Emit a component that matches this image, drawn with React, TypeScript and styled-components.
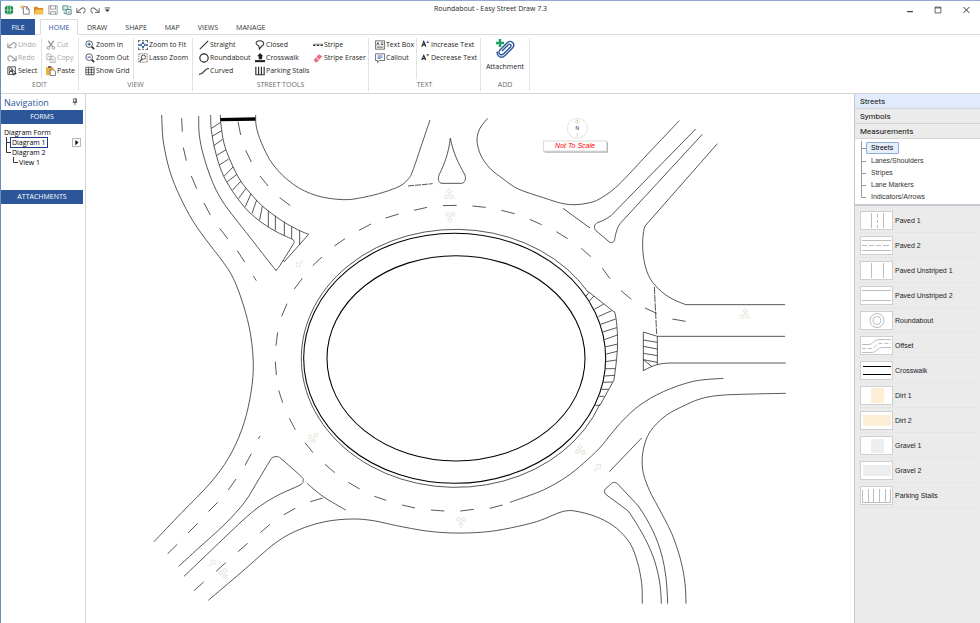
import React from "react";
import styled, { createGlobalStyle } from "styled-components";

const UI = '"Open Sans", "Noto Sans", sans-serif';
const ARIAL = '"Liberation Sans", Arial, sans-serif';
const BLUE = "#2b579a";

const GlobalStyle = createGlobalStyle`
  * { box-sizing: border-box; }
  html, body, #root { height: 100%; }
  body { margin: 0; background: #fff; font-family: ${UI}; font-size: 7px; color: #262626; }
  button { font: inherit; color: inherit; border: 0; padding: 0; margin: 0; background: none; cursor: pointer; }
`;

const Window = styled.div`
  height: 100vh;
  display: flex;
  flex-direction: column;
  border-top: 1px solid #8fa9d2;
  border-left: 1px solid #6d8dbf;
  overflow: hidden;
`;

const TitleBar = styled.header`
  display: grid;
  grid-template-columns: 1fr auto 1fr;
  align-items: center;
  height: 18px;
`;
const QuickBar = styled.div`
  display: flex;
  align-items: center;
  gap: 4px;
  padding-left: 3px;
`;
const QuickButton = styled.button`
  display: flex;
  width: 10px;
  height: 12px;
  align-items: center;
  &:first-child { margin-right: 2px; }
`;
const Title = styled.h1`
  margin: 0;
  font-size: 7px;
  line-height: 12px;
  padding-bottom: 2px;
  font-weight: 400;
`;
const WindowButtons = styled.div`
  display: flex;
  justify-content: flex-end;
  gap: 18px;
  padding-right: 9px;
`;
const WindowButton = styled.button`
  display: flex;
  width: 10px;
  height: 10px;
`;

const Tabs = styled.nav`
  display: flex;
  height: 16px;
  border-bottom: 1px solid #dcdcdc;
`;
const Tab = styled.button<{ $kind?: "file" | "active" }>`
  font-size: 7px;
  height: 16px;
  padding: 0 9px;
  color: ${(p) => (p.$kind === "file" ? "#fff" : p.$kind === "active" ? BLUE : "#333")};
  ${(p) => p.$kind === "file" && `background: ${BLUE}; width: 34px; margin-right: 5px; padding: 0;`}
  ${(p) =>
    p.$kind === "active" &&
    `border: 1px solid #dcdcdc; border-bottom: 0; background: #fff; width: 38px; padding: 0;`}
`;

const Ribbon = styled.div`
  display: flex;
  height: 59px;
  border-bottom: 1px solid #d6d6d6;
`;
const Group = styled.section<{ $w: number }>`
  display: flex;
  flex-direction: column;
  width: ${(p) => p.$w}px;
  margin: 3px 0 2px;
  border-right: 1px solid #e2e2e2;
`;
const GroupColumns = styled.div`
  display: flex;
  flex: 1;
`;
const Column = styled.div<{ $w: number; $line?: boolean }>`
  display: flex;
  flex-direction: column;
  width: ${(p) => p.$w}px;
  padding-left: 6px;
  border-right: ${(p) => (p.$line ? "1px solid #e2e2e2" : "0")};
  & + & { padding-left: 4px; }
`;
const GroupLabel = styled.h2`
  margin: 0;
  font-size: 7px;
  line-height: 12px;
  font-weight: 400;
  text-align: center;
  color: #6a6a6a;
`;
const Command = styled.button`
  display: flex;
  align-items: center;
  gap: 1px;
  height: 13px;
  white-space: nowrap;
  &:disabled { color: #a6a6a6; }
`;
const BigCommand = styled.button`
  display: flex;
  flex-direction: column;
  align-items: center;
  gap: 3px;
  padding-top: 1px;
  width: 100%;
`;

const Body = styled.div`
  display: flex;
  flex: 1;
  min-height: 0;
`;
const Navigation = styled.aside`
  width: 85px;
  flex: none;
  border-right: 1px solid #d6d6d6;
`;
const NavHead = styled.div`
  display: flex;
  align-items: center;
  justify-content: space-between;
  height: 16px;
  padding: 0 6px 0 3px;
`;
const NavTitle = styled.h2`
  margin: 0;
  font-size: 9px;
  font-weight: 400;
  color: ${BLUE};
`;
const NavBar = styled.h3`
  margin: 0 2px 0 0;
  height: 14px;
  font-size: 7px;
  line-height: 14px;
  font-weight: 400;
  text-align: center;
  color: #fff;
  background: ${BLUE};
`;
const NavTree = styled.div`
  height: 66px;
  padding: 3px 4px 0 3px;
`;
const NavLine = styled.div<{ $level: number }>`
  display: flex;
  align-items: center;
  height: 10px;
  padding-left: ${(p) => p.$level * 7}px;
`;
const NavItem = styled.button<{ $on?: boolean }>`
  height: 11px;
  line-height: 9px;
  color: #000;
  white-space: nowrap;
  ${(p) => p.$on && "border: 1px solid #1c3a8c; margin-left: -2px; padding: 0 1px;"}
`;
const OpenButton = styled.button`
  display: flex;
  width: 9px;
  height: 9px;
  margin-left: auto;
  border: 1px solid #b8b8b8;
`;

const Canvas = styled.main`
  flex: 1;
  min-width: 0;
  svg { display: block; width: 100%; height: 100%; }
`;

const Library = styled.aside`
  width: 126px;
  flex: none;
  display: flex;
  flex-direction: column;
  border-left: 1px solid #c9c9c9;
  font-family: ${ARIAL};
  background: #ebebeb;
`;
const LibraryHead = styled.button<{ $on?: boolean }>`
  height: 15px;
  flex: none;
  padding-left: 5px;
  font-family: Roboto, sans-serif;
  font-size: 8px;
  text-align: left;
  color: #111;
  background: ${(p) => (p.$on ? "#e1ebfd" : "#ebebeb")};
  border-bottom: 1px solid #d4d4d4;
`;
const LibraryTree = styled.div`
  background: #fff;
  height: 67px;
  flex: none;
  padding: 2px 0 0 6px;
  border-bottom: 2px solid #c8ccd2;
`;
const LibraryLine = styled.div`
  display: flex;
  align-items: center;
  height: 12px;
  &:first-child { height: 14px; }
`;
const TreeMark = styled.svg`
  flex: none;
  width: 10px;
  height: 14px;
`;
const LibraryItem = styled.button<{ $on?: boolean }>`
  font-size: 7px;
  line-height: 10px;
  color: #333;
  ${(p) =>
    p.$on &&
    "border: 1px solid #8fb0d6; border-radius: 1px; background: #e6eefb; margin-left: -5px; padding: 0 5px 0 4px; color: #000;"}
`;
const Shapes = styled.ul`
  list-style: none;
  margin: 0;
  padding: 2px 2px 0 3px;
`;
const ShapeRow = styled.li`
  height: 25px;
  border-bottom: 1px solid #e5e5e5;
`;
const ShapeButton = styled.button`
  display: flex;
  align-items: center;
  gap: 2px;
  width: 100%;
  height: 24px;
  padding-left: 2px;
  font-size: 7px;
  color: #222;
`;
const Thumb = styled.svg`
  width: 33px;
  height: 19px;
  border: 1px solid #cfcfcf;
  background: #fff;
`;

/* ---------- icons ---------- */

const icons: Record<string, React.ReactNode> = {
  logo: (
    <>
      <path d="M3 1h6l2 2v6l-2 2H3L1 9V3z" fill="#1d8a4a" />
      <path d="M4.500 1v10M7.500 1v10M1 6h10" stroke="#dff3e5" strokeWidth=".8" />
    </>
  ),
  file: (
    <>
      <path d="M4 2h4l3 3v6H4z" fill="#fff" stroke="#666" />
      <path d="M8 2v3h3" fill="none" stroke="#666" />
      <path d="M2.500 0v5M0 2.500h5" stroke="#e8a13a" />
    </>
  ),
  folder: (
    <>
      <path d="M0 2h4l1 1.500h6V11H0z" fill="#d58a1a" />
      <path d="M2.500 5.500H12L10 11H0z" fill="#f6c155" />
    </>
  ),
  save: <path d="M1 1h10v10H1zM3 1v4h6V1M3 11V8h6v3" fill="none" stroke="#8b8b8b" />,
  saveAll: (
    <>
      <path d="M1 1h6v5H1z" fill="#d5eee2" stroke="#3c8a6b" />
      <path d="M5 5.500h6V11H5z" fill="#fff" stroke="#3c6c7b" />
      <path d="M7 8.500h2.500M2.500 8v2h2M8.500 2h2v2" fill="none" stroke="#3c8a6b" />
    </>
  ),
  undo: (
    <path d="M1 4v5h5M1.500 8.500 6 4.500c2-2 5-1 5 1.500 0 1.500-1 3-2.500 4" fill="none" stroke="#777" strokeWidth="1.300" />
  ),
  redo: (
    <path d="M11 4v5H6M10.500 8.500 6 4.500C4 2.500 1 3.500 1 6c0 1.500 1 3 2.500 4" fill="none" stroke="#777" strokeWidth="1.300" />
  ),
  undoOff: (
    <path d="M1 4v5h5M1.500 8.500 6 4.500c2-2 5-1 5 1.500 0 1.500-1 3-2.500 4" fill="none" stroke="#a4a4a4" strokeWidth="1.500" />
  ),
  redoOff: (
    <path d="M11 4v5H6M10.500 8.500 6 4.500C4 2.500 1 3.500 1 6c0 1.500 1 3 2.500 4" fill="none" stroke="#a4a4a4" strokeWidth="1.500" />
  ),
  caret: (
    <>
      <path d="M1 3.500h6" stroke="#333" />
      <path d="M1 5.500h6L4 8.500z" fill="#333" />
    </>
  ),
  select: (
    <>
      <path d="M1 1h9v9H1z" fill="none" stroke="#333" />
      <circle cx="4.500" cy="4" r="1.800" fill="none" stroke="#333" />
      <path d="M3 9V6.500h3M6 4l5 5H8.500l-1 2z" fill="#fff" stroke="#222" />
    </>
  ),
  cut: (
    <>
      <path d="M2.500 1 8 8M9.500 1 4 8" stroke="#8b8b8b" strokeWidth="1.300" />
      <circle cx="3" cy="9.500" r="1.600" fill="none" stroke="#8b8b8b" />
      <circle cx="9" cy="9.500" r="1.600" fill="none" stroke="#8b8b8b" />
    </>
  ),
  copy: (
    <path d="M1 1h4l1.500 1.500V8H1zM5 4h4l2 2v5.500H5zM2.500 4H5M7 7.500h2.500M7 9.500h2.500" fill="none" stroke="#a8a8a8" />
  ),
  paste: (
    <>
      <path d="M0 1.500h9V11H0z" fill="#f0b03c" />
      <path d="M2.500 0h4v2.500h-4z" fill="#6a6a6a" />
      <path d="M5 4.500h4l2.500 2v5H5z" fill="#fff" stroke="#666" />
    </>
  ),
  zoomIn: (
    <>
      <circle cx="5" cy="5" r="4" fill="#fff" stroke="#444" />
      <path d="M3 5h4M5 3v4" stroke={BLUE} strokeWidth="1.300" />
      <path d="m8 8 3 3" stroke="#333" strokeWidth="2" />
    </>
  ),
  zoomOut: (
    <>
      <circle cx="5" cy="5" r="4" fill="#fff" stroke="#444" />
      <path d="M3 5h4" stroke={BLUE} strokeWidth="1.300" />
      <path d="m8 8 3 3" stroke="#333" strokeWidth="2" />
    </>
  ),
  grid: <path d="M1 1.500h10v9H1zM1 4.500h10M1 7.500h10M4.300 1.500v9M7.700 1.500v9" fill="none" stroke="#444" />,
  fit: (
    <>
      <path d="M.5 3V.5H3M9 .5h2.500V3M11.500 9v2.500H9M3 11.500H.5V9" fill="none" stroke="#333" />
      <path d="M5 .5h2M5 11.500h2" stroke="#333" />
      <path d="M0 6h3.500M8.500 6H12M6 2v2.500M6 7.500V10" stroke={BLUE} strokeWidth="2" />
      <circle cx="6" cy="6" r="2" fill="none" stroke={BLUE} />
    </>
  ),
  lasso: (
    <>
      <path d="M1 1h10v10H1z" fill="none" stroke="#666" strokeDasharray="2 1" />
      <circle cx="6.500" cy="5" r="2.500" fill="#fff" stroke="#333" />
      <path d="m5 7-3 3.500" stroke="#333" strokeWidth="1.300" />
    </>
  ),
  straight: <path d="M1 11 11 1" stroke="#333" strokeWidth="1.300" />,
  circle: <circle cx="6" cy="6" r="5" fill="none" stroke="#222" strokeWidth="1.400" />,
  curved: <path d="M0 10c3 0 4-1 5.500-3s3-4 6.500-4" fill="none" stroke="#333" strokeWidth="1.400" />,
  closed: (
    <path d="M3 1.500c3-1.500 7.500 0 7.500 3S5.500 7.500 5.500 11C4 8.500 6 7 3 6 .5 5 1 2.500 3 1.500z" fill="none" stroke="#333" strokeWidth="1.300" />
  ),
  crosswalk: (
    <>
      <path d="M0 8.500h12V11H0z" fill="#222" />
      <path d="M6 0 2.500 4h2v3.500h4V4h1.500z" fill="#222" />
    </>
  ),
  stalls: <path d="M1 1v9.500h10V1M4.300 1v9M7.700 1v9" fill="none" stroke="#333" strokeWidth="1.400" />,
  stripe: (
    <>
      <path d="M0 5h12" stroke="#777" />
      <path d="M0 6.500h3M4.500 6.500h3M9 6.500h3" stroke="#333" strokeWidth="1.500" />
    </>
  ),
  eraser: (
    <>
      <path d="m1 8 6-6.500L11 4l-6 7H2.500z" fill="#ee6d83" />
      <path d="m3.500 5.300 4 3" stroke="#fff" />
    </>
  ),
  textBox: (
    <>
      <path d="M.5 1h11v10H.5z" fill="#fff" stroke="#555" />
      <path d="M2 6.500 3.500 3 5 6.500M7 3.500h3M7 5.500h3M2 8.500h8" fill="none" stroke="#333" />
    </>
  ),
  callout: (
    <>
      <path d="M.5 1h11v8H5l-2 2.500V9H.5z" fill="#fff" stroke="#555" />
      <path d="M3 3.500h6M3 5h6M3 6.500h4" stroke="#3a76c4" />
    </>
  ),
  bigger: (
    <>
      <path d="M1 9 3.700 2 6.500 9M2 6.500h3.500" fill="none" stroke="#222" strokeWidth="1.400" />
      <path d="M7 4h4L9 1z" fill={BLUE} />
    </>
  ),
  smaller: (
    <>
      <path d="M1 9.500 3.700 3 6.500 9.500M2 7.500h3.500" fill="none" stroke="#222" strokeWidth="1.400" />
      <path d="M7 1.500h4L9 4.500z" fill={BLUE} />
    </>
  ),
  pin: <path d="M4 1h4v5H4zM2.500 6.500h7M6 6.500V11M7.300 1v5" fill="none" stroke="#333" />,
  play: <path d="M4 1.500v9L9.500 6z" fill="#111" />,
  min: <path d="M2.500 8h7" stroke="#222" strokeWidth="1.300" />,
  max: <path d="M2.500 2.500h7v7h-7zM2.500 3.500h7" fill="none" stroke="#444" strokeWidth="1" />,
  close: <path d="m3 2.500 7 7M10 2.500l-7 7" stroke="#333" strokeWidth="1.200" />,
};

const Glyph = styled.svg`
  display: block;
  flex: none;
`;
const Icon = ({ name, size = 10 }: { name: string; size?: number }) => (
  <Glyph width={size} height={size} viewBox="0 0 12 12" aria-hidden="true">
    {icons[name]}
  </Glyph>
);

const Cmd = ({ icon, size, children, off }: { icon: string; size?: number; children: string; off?: boolean }) => (
  <Command disabled={off}>
    <Icon name={icon} size={size} />
    {children}
  </Command>
);

/* ---------- road drawing ---------- */

type Pt = [number, number];
type Seg = [number, number, number, number];

const curve = (pts: Pt[]) => {
  let d = `M${pts[0]}`;
  for (let i = 0; i < pts.length - 1; i++) {
    const a = pts[i - 1] || pts[i];
    const b = pts[i];
    const c = pts[i + 1];
    const e = pts[i + 2] || c;
    d += `C${b[0] + (c[0] - a[0]) / 6},${b[1] + (c[1] - a[1]) / 6} ${c[0] - (e[0] - b[0]) / 6},${c[1] - (e[1] - b[1]) / 6} ${c}`;
  }
  return d;
};
const lines = (segs: Seg[]) => segs.map(([a, b, c, d]) => `M${a},${b}L${c},${d}`).join("");

const Area = ({ x, y, children }: { x: number; y: number; children: React.ReactNode }) => (
  <g transform={`translate(${x} ${y})`}>{children}</g>
);
const Curve = ({ pts }: { pts: Pt[] }) => <path d={curve(pts)} />;
const Lines = ({ segs }: { segs: Seg[] }) => <path d={lines(segs)} />;

const Marker = ({ x, y, turn, single }: { x: number; y: number; turn: number; single?: boolean }) => (
  <g transform={`translate(${x} ${y}) rotate(${turn})`} stroke="#e0dccf" strokeWidth="2">
    {single ? (
      <path d="M-3 12V-3h-6L0-14 9-3H3v15z" />
    ) : (
      <path d="M-2 4V-6h-5L0-16 7-6H2V2l6 4 2-4 4 10-12 2 3-4-5-2-6 2 2 4-11-2 3-11 3 5z" />
    )}
  </g>
);

const Drawing = () => (
  <svg viewBox="0 0 2304 1587" preserveAspectRatio="xMidYMin meet" role="img" aria-label="Roundabout diagram">
    <g fill="none" stroke="#3c3c3c" strokeWidth="2.600">
      <ellipse cx="1110" cy="793" rx="387" ry="308" stroke="#000" strokeWidth="3.200" />
      <ellipse cx="1106" cy="793" rx="453" ry="375" stroke="#000" strokeWidth="3.200" />
      <path d="M1542 930A463 387 0 1 1 1506 594" />

      <Area x={192} y={33}>
        <Curve
          pts={[
            [35, 30], [40, 110], [60, 200], [90, 275], [130, 350], [180, 420], [215, 465], [250, 520], [280, 600],
            [302, 690], [310, 790], [299, 885], [275, 975], [235, 1060], [180, 1135], [96, 1222], [12, 1310],
          ]}
        />
        <Lines
          segs={[
            [95, 40, 97, 80], [100, 128, 109, 167], [124, 213, 140, 251], [162, 294, 181, 330], [209, 370, 233, 401],
            [262, 437, 284, 471], [310, 513, 319, 527],
            [264, 50, 272, 90], [287, 136, 304, 171], [330, 213, 354, 243], [389, 278, 421, 302],
            [627, 376, 663, 357], [553, 423, 585, 401], [488, 482, 516, 456], [433, 552, 457, 520],
            [411, 596, 395, 634], [383, 682, 378, 722], [376, 770, 379, 810], [386, 856, 398, 893],
          ]}
        />
        <Curve
          pts={[
            [146, 33], [148, 90], [160, 150], [185, 225], [215, 285], [255, 340], [300, 397], [371, 488], [378, 493],
            [386, 487], [428, 420], [432, 410], [425, 402], [375, 378], [325, 345], [285, 308], [245, 255], [215, 200],
            [195, 135], [184, 75], [182, 30],
          ]}
        />
        <Curve
          pts={[
            [211, 30], [213, 60], [222, 115], [240, 165], [270, 225], [310, 275], [345, 310], [400, 350], [445, 375],
            [476, 388],
          ]}
        />
        <path d="M476 388 403 470l-3-5" />
        <Lines
          segs={[
            [184, 70, 212, 52], [186, 94, 215, 77], [191, 122, 218, 103], [199, 152, 228, 134], [208, 180, 236, 162],
            [222, 214, 249, 186], [232, 230, 261, 208], [248, 255, 273, 228], [266, 280, 288, 250], [286, 305, 303, 266],
            [306, 325, 320, 285], [329, 345, 337, 303], [355, 365, 355, 317], [376, 376, 376, 332], [403, 392, 403, 350],
            [425, 402, 425, 364], [449, 420, 449, 376],
          ]}
        />
        <path d="M211 44 317 42" stroke="#000" strokeWidth="10" />
        <Curve
          pts={[
            [317, 30], [319, 65], [335, 115], [370, 180], [430, 238], [500, 272], [580, 284], [640, 277], [700, 262],
            [750, 243], [775, 222], [788, 198], [814, 122], [840, 45],
          ]}
        />
        <Marker x={448} y={476} turn={225} single />
      </Area>

      <Area x={852} y={33}>
        <path d="M241 99C236 145 222 180 208 208 202 222 206 235 216 235H275C286 233 288 222 285 210 265 175 248 140 241 99" />
        <path d="M114 243 188 236" strokeDasharray="18 3" />
        <Lines
          segs={[
            [47, 339, 86, 327], [132, 316, 171, 307], [219, 302, 260, 301], [307, 303, 347, 307],
            [394, 316, 434, 326], [479, 343, 515, 359], [559, 380, 593, 401], [634, 430, 662, 455], [697, 490, 720, 521],
            [579, 310, 660, 369],
          ]}
        />
        <Curve
          pts={[
            [353, 40], [330, 70], [321, 105], [332, 150], [360, 190], [400, 222], [445, 252], [520, 278], [575, 295],
            [615, 299], [655, 294], [690, 281], [745, 240], [836, 144], [928, 47],
          ]}
        />
        <Marker x={238} y={267} turn={0} />
        <Marker x={240} y={337} turn={180} />
        <circle cx="622" cy="70" r="30" stroke="#dedede" />
        <path d="M622 45v12M622 84v12M614 53l8-9 8 9" stroke="#cfcac0" />
        <path d="M524 141h188v-30" stroke="#b5b5b5" strokeWidth="4" />
        <rect x="520" y="108" width="190" height="30" fill="#fff" stroke="#d5d5d5" />
      </Area>

      <Area x={1452} y={33}>
        <path d="M377 72 123 332C105 345 92 350 82 353 73 358 70 368 78 377L118 411C128 415 133 410 134 403 138 380 142 368 150 356L397 88" />
        <path d="M442 116 225 363C212 400 214 500 255 540 280 570 310 586 348 599H645" />
        <Lines segs={[[153, 557, 184, 583]]} />
      </Area>

      <Area x={1422} y={558}>
        <path d="M85 35 165 98C172 130 174 180 172 210 170 245 165 275 162 300L120 376" />
        <Lines
          segs={[
            [78, 48, 88, 36], [88, 63, 102, 48], [103, 88, 131, 72], [115, 110, 155, 92], [122, 133, 167, 117],
            [128, 156, 170, 143], [133, 179, 172, 165], [135, 201, 173, 192], [136, 223, 171, 214], [136, 245, 169, 240],
            [136, 266, 165, 266], [133, 288, 164, 286], [129, 307, 158, 306], [124, 328, 146, 328], [118, 349, 133, 349],
            [106, 376, 120, 376],
            [250, 180, 292, 187], [250, 199, 292, 207], [250, 220, 292, 227], [250, 239, 292, 247], [250, 239, 276, 260],
            [255, 84, 290, 100], [337, 117, 377, 124],
          ]}
        />
        <path d="M283 20 290 162" strokeDasharray="22 3" />
        <path d="M675 169H292L250 156V272C285 253 300 250 333 249H677M292 169v85" />
        <Curve
          pts={[
            [490, 295], [400, 304], [310, 335], [240, 375], [190, 420], [155, 460], [118, 505], [70, 550], [20, 590],
            [-50, 630], [-150, 667],
          ]}
        />
        <Curve
          pts={[
            [677, 340], [580, 342], [480, 346], [420, 357], [370, 378], [320, 405], [280, 442], [258, 480], [247, 530],
            [250, 580], [270, 635], [295, 682], [335, 760], [362, 840], [375, 910], [378, 971],
          ]}
        />
        <Marker x={555} y={101} turn={0} />
      </Area>

      <Area x={177} y={918}>
        <Lines
          segs={[
            [345, 108, 340, 117], [319, 161, 300, 196], [273, 237, 250, 270], [218, 307, 191, 334], [158, 370, 129, 399],
            [97, 433, 68, 461], [533, 294, 496, 305], [451, 325, 417, 344], [375, 373, 346, 398], [308, 430, 279, 455],
            [242, 488, 213, 514], [176, 546, 147, 572], [433, 55, 451, 89], [480, 128, 504, 158], [540, 193, 569, 218],
            [610, 247, 644, 267], [688, 289, 724, 301],
          ]}
        />
        <Curve
          pts={[
            [101, 499], [160, 445], [240, 372], [300, 305], [340, 240], [375, 182], [384, 172], [397, 170], [408, 176],
            [468, 229], [474, 242], [465, 255], [400, 285], [350, 315], [300, 355], [210, 440], [117, 529],
          ]}
        />
        <Curve pts={[[486, 250], [535, 290], [602, 330]]} />
        <Marker x={507} y={111} turn={45} />
        <Marker x={201} y={490} turn={45} single />
        <Marker x={237} y={523} turn={150} />
      </Area>

      <Area x={852} y={918}>
        <Lines segs={[[96, 315, 135, 324], [183, 330, 223, 333], [271, 333, 311, 328], [359, 325, 398, 315]]} />
        <Marker x={273} y={367} turn={180} />
        <Marker x={633} y={153} turn={120} />
      </Area>

      <Area x={1392} y={978}>
        <Lines segs={[[275, 54, 178, 155]]} />
        <path d="M334 551C332 440 300 370 235 273L167 223C162 217 162 211 167 206L185 190C192 185 199 187 205 194L265 258C335 360 350 440 353 551" />
        <Curve
          pts={[
            [277, 551], [275, 490], [262, 425], [240, 370], [200, 325], [150, 295], [90, 276], [40, 274], [-40, 305],
            [-140, 328], [-210, 337], [-290, 339], [-370, 333], [-460, 317], [-530, 302], [-595, 297], [-675, 305],
            [-755, 330], [-825, 370], [-925, 456], [-1025, 541],
          ]}
        />
        <Marker x={143} y={143} turn={45} single />
      </Area>
    </g>
    <text x="1474" y="109" fontFamily="Liberation Sans" fontSize="15" textAnchor="middle" fill="#223">
      N
    </text>
    <text x="1467" y="163" fontFamily="Liberation Sans" fontSize="21" fontStyle="italic" textAnchor="middle" fill="#f00">
      Not To Scale
    </text>
  </svg>
);

/* ---------- library thumbnails ---------- */

const g = { fill: "none", stroke: "#bdbdbd" };
const shapes: [string, React.ReactNode][] = [
  ["Paved 1", <path key="a" {...g} d="M10.500 1v15M22.500 1v15M16.500 2v4M16.500 8v3M16.500 13v3" />],
  ["Paved 2", <path key="b" {...g} d="M1 3.500h29M1 13.500h29M1 8.500h5M8 8.500h5M15 8.500h5M22 8.500h6" />],
  ["Paved Unstriped 1", <path key="c" {...g} d="M10.500 1v15M22.500 1v15" />],
  ["Paved Unstriped 2", <path key="d" {...g} d="M1 3.500h29M1 13.500h29" />],
  ["Roundabout", <g key="e" {...g}><circle cx="16" cy="8.500" r="7" /><circle cx="16" cy="8.500" r="4" /></g>],
  [
    "Offset",
    <g key="f" {...g}>
      <path d="M1 7.500h7c4 0 5-5 10-5h12M1 15.500h10c4 0 6-5 10-5h9" />
      <path d="M1 11.500h9c4 0 5-5 9-5h11" strokeDasharray="4 2" />
    </g>,
  ],
  ["Crosswalk", <path key="g" stroke="#000" d="M2 4.500h28M2 12.500h28" />],
  ["Dirt 1", <rect key="h" x="10" y="1" width="13" height="15" fill="#fdeed6" />],
  ["Dirt 2", <rect key="i" x="2" y="3" width="28" height="11" fill="#fdeed6" />],
  ["Gravel 1", <rect key="j" x="10" y="2" width="13" height="14" fill="#eee" />],
  ["Gravel 2", <rect key="k" x="2" y="3" width="28" height="11" fill="#eee" />],
  ["Parking Stalls", <path key="l" {...g} d="M1 15.500h29M1.500 3v12M7.500 2v14M12.500 2v14M18.500 2v14M24.500 2v14M29.500 2v14" />],
];

const kinds = ["Streets", "Lanes/Shoulders", "Stripes", "Lane Markers", "Indicators/Arrows"];

export default function App() {
  return (
    <>
      <GlobalStyle />
      <Window>
        <TitleBar>
          <QuickBar>
            {["logo", "file", "folder", "save", "saveAll", "undo", "redo", "caret"].map((n) => (
              <QuickButton key={n} aria-label={n}>
                <Icon name={n} />
              </QuickButton>
            ))}
          </QuickBar>
          <Title>Roundabout - Easy Street Draw 7.3</Title>
          <WindowButtons>
            {["min", "max", "close"].map((n) => (
              <WindowButton key={n} aria-label={n}>
                <Icon name={n} />
              </WindowButton>
            ))}
          </WindowButtons>
        </TitleBar>

        <Tabs>
          <Tab $kind="file">FILE</Tab>
          <Tab $kind="active">HOME</Tab>
          {["DRAW", "SHAPE", "MAP", "VIEWS", "MANAGE"].map((t) => (
            <Tab key={t}>{t}</Tab>
          ))}
        </Tabs>

        <Ribbon>
          <Group $w={78}>
            <GroupColumns>
              <Column $w={41} $line>
                <Cmd icon="undoOff" off>Undo</Cmd>
                <Cmd icon="redoOff" off>Redo</Cmd>
                <Cmd icon="select">Select</Cmd>
              </Column>
              <Column $w={36}>
                <Cmd icon="cut" off>Cut</Cmd>
                <Cmd icon="copy" off>Copy</Cmd>
                <Cmd icon="paste">Paste</Cmd>
              </Column>
            </GroupColumns>
            <GroupLabel>EDIT</GroupLabel>
          </Group>
          <Group $w={114}>
            <GroupColumns>
              <Column $w={55} $line>
                <Cmd icon="zoomIn">Zoom In</Cmd>
                <Cmd icon="zoomOut">Zoom Out</Cmd>
                <Cmd icon="grid">Show Grid</Cmd>
              </Column>
              <Column $w={58}>
                <Cmd icon="fit">Zoom to Fit</Cmd>
                <Cmd icon="lasso">Lasso Zoom</Cmd>
              </Column>
            </GroupColumns>
            <GroupLabel>VIEW</GroupLabel>
          </Group>
          <Group $w={176}>
            <GroupColumns>
              <Column $w={58}>
                <Cmd icon="straight">Straight</Cmd>
                <Cmd icon="circle">Roundabout</Cmd>
                <Cmd icon="curved">Curved</Cmd>
              </Column>
              <Column $w={58}>
                <Cmd icon="closed">Closed</Cmd>
                <Cmd icon="crosswalk">Crosswalk</Cmd>
                <Cmd icon="stalls">Parking Stalls</Cmd>
              </Column>
              <Column $w={59}>
                <Cmd icon="stripe">Stripe</Cmd>
                <Cmd icon="eraser">Stripe Eraser</Cmd>
              </Column>
            </GroupColumns>
            <GroupLabel>STREET TOOLS</GroupLabel>
          </Group>
          <Group $w={112}>
            <GroupColumns>
              <Column $w={48} $line>
                <Cmd icon="textBox">Text Box</Cmd>
                <Cmd icon="callout">Callout</Cmd>
              </Column>
              <Column $w={63}>
                <Cmd icon="bigger" size={9}>Increase Text</Cmd>
                <Cmd icon="smaller" size={9}>Decrease Text</Cmd>
              </Column>
            </GroupColumns>
            <GroupLabel>TEXT</GroupLabel>
          </Group>
          <Group $w={49}>
            <GroupColumns>
              <BigCommand>
                <svg width="20" height="20" viewBox="0 0 20 20" aria-hidden="true">
                  <path d="M5 0v8M1 4h8" stroke="#1ea362" strokeWidth="2.500" />
                  <path
                    d="m7 12 6-6c2-2 4 0 2.500 2L9 14.500c-3 3-7 0-4-3.500l7-7c4-4 9 1 5.500 5L10 16.500c-4 4-9 0-7.500-4"
                    fill="none"
                    stroke={BLUE}
                    strokeWidth="1.400"
                  />
                </svg>
                Attachment
              </BigCommand>
            </GroupColumns>
            <GroupLabel>ADD</GroupLabel>
          </Group>
        </Ribbon>

        <Body>
          <Navigation>
            <NavHead>
              <NavTitle>Navigation</NavTitle>
              <Icon name="pin" size={8} />
            </NavHead>
            <NavBar>FORMS</NavBar>
            <NavTree>
              <NavLine $level={0}>
                <NavItem>Diagram Form</NavItem>
              </NavLine>
              <NavLine $level={0}>
                <TreeBranch tall />
                <NavItem $on>Diagram 1</NavItem>
                <OpenButton aria-label="Open Diagram 1">
                  <Icon name="play" size={7} />
                </OpenButton>
              </NavLine>
              <NavLine $level={0}>
                <TreeBranch />
                <NavItem>Diagram 2</NavItem>
              </NavLine>
              <NavLine $level={1}>
                <TreeBranch />
                <NavItem>View 1</NavItem>
              </NavLine>
            </NavTree>
            <NavBar>ATTACHMENTS</NavBar>
          </Navigation>

          <Canvas>
            <Drawing />
          </Canvas>

          <Library>
            <LibraryHead $on>Streets</LibraryHead>
            <LibraryHead>Symbols</LibraryHead>
            <LibraryHead>Measurements</LibraryHead>
            <LibraryTree>
              {kinds.map((k, i) => (
                <LibraryLine key={k}>
                  <TreeMark viewBox="0 0 10 14" aria-hidden="true">
                    <path d={i < kinds.length - 1 ? "M.5 0v14M.5 7.500H5" : "M.5 0v7.500H5"} fill="none" stroke="#999" />
                  </TreeMark>
                  <LibraryItem $on={i === 0}>{k}</LibraryItem>
                </LibraryLine>
              ))}
            </LibraryTree>
            <Shapes>
              {shapes.map(([name, art]) => (
                <ShapeRow key={name}>
                  <ShapeButton>
                    <Thumb viewBox="0 0 31 17" aria-hidden="true">
                      {art}
                    </Thumb>
                    {name}
                  </ShapeButton>
                </ShapeRow>
              ))}
            </Shapes>
          </Library>
        </Body>
      </Window>
    </>
  );
}

function TreeBranch({ tall }: { tall?: boolean }) {
  return (
    <Glyph width="8" height="10" viewBox="0 0 8 10" aria-hidden="true">
      <path d={tall ? "M2.500 0v10M2.500 5.500H6" : "M2.500 0v5.500H7"} fill="none" stroke="#333" />
    </Glyph>
  );
}
